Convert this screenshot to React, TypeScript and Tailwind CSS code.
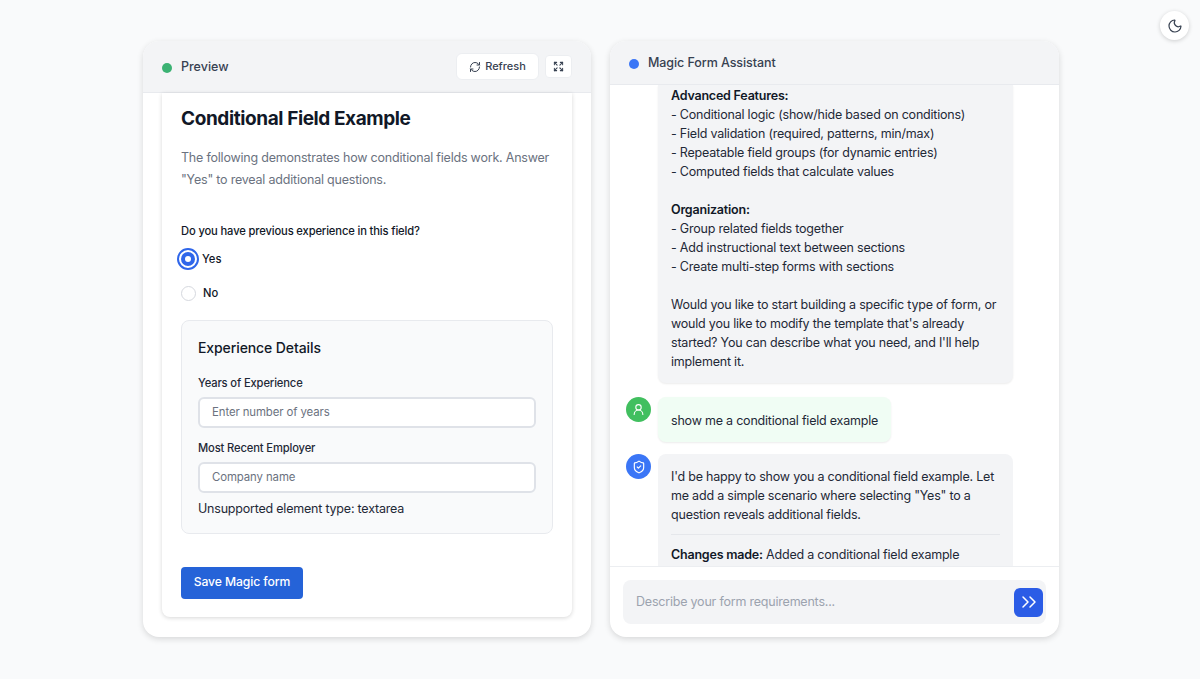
import { ChevronsRight, Expand, Moon, RefreshCw, ShieldCheck, UserRound } from "lucide-react";

const inputClass =
  "block h-[31px] w-full rounded-md border-2 border-[#dfe2e8] bg-white px-[12px] text-[11.4px] tracking-[-0.1px] text-gray-900 placeholder:text-[#6b7280] outline-none";

const bodyText = "text-[12.5px] tracking-[-0.21px]";

function Radio({ label, checked }: { label: string; checked?: boolean }) {
  return (
    <div className="flex items-center gap-[7px]">
      {checked ? (
        <span className="flex h-[14px] w-[14px] items-center justify-center rounded-full bg-[#2f66ea] ring-2 ring-white outline-2 outline-offset-2 outline-[#2f66ea]">
          <span className="h-[6px] w-[6px] rounded-full bg-white" />
        </span>
      ) : (
        <span className="h-[15px] w-[15px] rounded-full border border-[#d5d8de] bg-white" />
      )}
      <span className="text-[11.2px] font-medium text-[#111827]">{label}</span>
    </div>
  );
}

function PreviewPanel() {
  return (
    <section className="flex h-[596px] w-[448px] flex-col overflow-hidden rounded-2xl bg-white shadow-[0_2px_6px_rgba(0,0,0,0.14)]">
      <header className="flex h-[52px] shrink-0 items-center justify-between border-b border-[#e8eaee] bg-[#f3f4f6] px-[19px]">
        <div className="flex items-center gap-[9px] pt-[2px]">
          <span className="h-[10px] w-[10px] rounded-full bg-[#3bb273]" />
          <span className="text-[12.5px] font-medium text-[#374151]">Preview</span>
        </div>
        <div className="flex items-center gap-[6px]">
          <button className="flex h-[27px] w-[83px] items-center justify-center gap-[4px] rounded-md border border-[#eceef1] bg-white text-[11px] font-medium text-[#374151]">
            <RefreshCw size={12} strokeWidth={2} />
            Refresh
          </button>
          <button className="flex h-[23px] w-[27px] items-center justify-center rounded-[4px] border border-[#eceef1] bg-white text-[#374151]">
            <Expand size={11} strokeWidth={2.2} />
          </button>
        </div>
      </header>
      <div className="px-[19px] pb-[19px]">
        <div className="h-[524px] rounded-b-lg bg-white px-[19px] shadow-[0_1px_4px_rgba(0,0,0,0.16)]">
          <h1 className="pt-[12px] text-[19px] font-bold leading-[28px] tracking-[-0.4px] text-[#111827]">
            Conditional Field Example
          </h1>
          <p className={`mt-[14px] leading-[22px] text-[#6b7280] ${bodyText}`}>
            The following demonstrates how conditional fields work. Answer "Yes" to reveal additional questions.
          </p>
          <div className="mt-[32px] text-[11.2px] font-medium leading-[16px] tracking-[-0.14px] text-[#111827]">
            Do you have previous experience in this field?
          </div>
          <div className="mt-[12px] flex flex-col gap-[17px]">
            <Radio label="Yes" checked />
            <Radio label="No" />
          </div>
          <div className="mt-[18px] h-[214px] rounded-lg border border-[#e8eaee] bg-[#f9fafb] px-[16px] pt-[17px]">
            <h2 className="text-[14px] font-medium leading-[20px] tracking-[-0.1px] text-[#111827]">Experience Details</h2>
            <label className="mt-[17px] block text-[11.2px] font-medium leading-[16px] tracking-[-0.14px] text-[#1f2937]">
              Years of Experience
            </label>
            <input className={`${inputClass} mt-[6px]`} placeholder="Enter number of years" readOnly />
            <label className="mt-[12px] block text-[11.2px] font-medium leading-[16px] tracking-[-0.14px] text-[#1f2937]">
              Most Recent Employer
            </label>
            <input className={`${inputClass} mt-[6px]`} placeholder="Company name" readOnly />
            <p className={`mt-[6px] leading-[20px] text-[#1f2937] ${bodyText}`}>Unsupported element type: textarea</p>
          </div>
          <button className="mt-[33px] h-[32px] w-[122px] rounded-[4px] bg-[#2563d8] text-[12.2px] font-medium tracking-[-0.1px] text-white">
            Save Magic form
          </button>
        </div>
      </div>
    </section>
  );
}

function Avatar({ tone, children }: { tone: string; children: React.ReactNode }) {
  return <div className={`flex h-[25px] w-[25px] shrink-0 items-center justify-center rounded-full text-white ${tone}`}>{children}</div>;
}

function ChatPanel() {
  return (
    <section className="flex h-[596px] w-[449px] flex-col overflow-hidden rounded-2xl bg-white shadow-[0_2px_6px_rgba(0,0,0,0.14)]">
      <header className="flex h-[44px] shrink-0 items-center gap-[9px] border-b border-[#e8eaee] bg-[#f3f4f6] pl-[19px] pt-[2px]">
        <span className="h-[10px] w-[10px] rounded-full bg-[#3b76f6]" />
        <span className="text-[12.5px] font-medium tracking-[-0.08px] text-[#374151]">Magic Form Assistant</span>
      </header>
      <div className="min-h-0 flex-1 overflow-hidden pl-[16px]">
        <div className={`ml-[32px] w-[355px] rounded-b-lg bg-[#f3f4f6] px-[13px] pb-[12px] pt-[1px] leading-[19px] text-[#1f2937] shadow-[0_1px_2px_rgba(0,0,0,0.08)] ${bodyText}`}>
          <strong className="font-semibold text-[#111827]">Advanced Features:</strong>
          <br />- Conditional logic (show/hide based on conditions)
          <br />- Field validation (required, patterns, min/max)
          <br />- Repeatable field groups (for dynamic entries)
          <br />- Computed fields that calculate values
          <br />
          <br />
          <strong className="font-semibold text-[#111827]">Organization:</strong>
          <br />- Group related fields together
          <br />- Add instructional text between sections
          <br />- Create multi-step forms with sections
          <br />
          <br />
          Would you like to start building a specific type of form, or would you like to modify the template that's already started? You can describe what you need, and I'll help implement it.
        </div>
        <div className="mt-[14px] flex gap-[7px]">
          <Avatar tone="bg-[#41bf5f]">
            <UserRound size={13} strokeWidth={2} />
          </Avatar>
          <div className={`rounded-lg bg-[#f0fdf4] px-[13px] pb-[12px] pt-[14px] leading-[19px] text-[#1f2937] shadow-[0_1px_2px_rgba(0,0,0,0.08)] ${bodyText}`}>
            show me a conditional field example
          </div>
        </div>
        <div className="mt-[12px] flex gap-[7px]">
          <Avatar tone="bg-[#3b76f6]">
            <ShieldCheck size={14} strokeWidth={2} />
          </Avatar>
          <div className={`w-[355px] rounded-lg bg-[#f3f4f6] px-[13px] pb-[12px] pt-[13px] leading-[19px] text-[#1f2937] ${bodyText}`}>
            I'd be happy to show you a conditional field example. Let me add a simple scenario where selecting "Yes" to a question reveals additional fields.
            <div className="my-[10px] border-t border-[#e5e7eb]" />
            <strong className="font-semibold text-[#111827]">Changes made:</strong> Added a conditional field example
          </div>
        </div>
      </div>
      <div className="shrink-0 border-t border-[#eceef1] px-[13px] pb-[13px] pt-[13px]">
        <div className="flex h-[44px] w-[423px] items-center justify-between rounded-lg bg-[#f3f4f6] pl-[13px] pr-[3px]">
          <input className={`w-[340px] bg-transparent outline-none placeholder:text-[#9ca3af] ${bodyText}`} placeholder="Describe your form requirements..." readOnly />
          <button className="flex h-[29px] w-[29px] items-center justify-center rounded-md bg-[#2b5ce6] text-white">
            <ChevronsRight size={24} strokeWidth={1.5} />
          </button>
        </div>
      </div>
    </section>
  );
}

export default function App() {
  return (
    <div className="relative flex h-[679px] w-full gap-[19px] overflow-hidden bg-[#f9fafb] pl-[143px] pt-[41px] font-['Inter',sans-serif]">
      <PreviewPanel />
      <ChatPanel />
      <button className="absolute right-[11px] top-[11px] flex h-[29px] w-[29px] items-center justify-center rounded-full bg-white text-[#374151] shadow-[0_1px_4px_rgba(0,0,0,0.18)]">
        <Moon size={16} strokeWidth={1.8} />
      </button>
    </div>
  );
}
